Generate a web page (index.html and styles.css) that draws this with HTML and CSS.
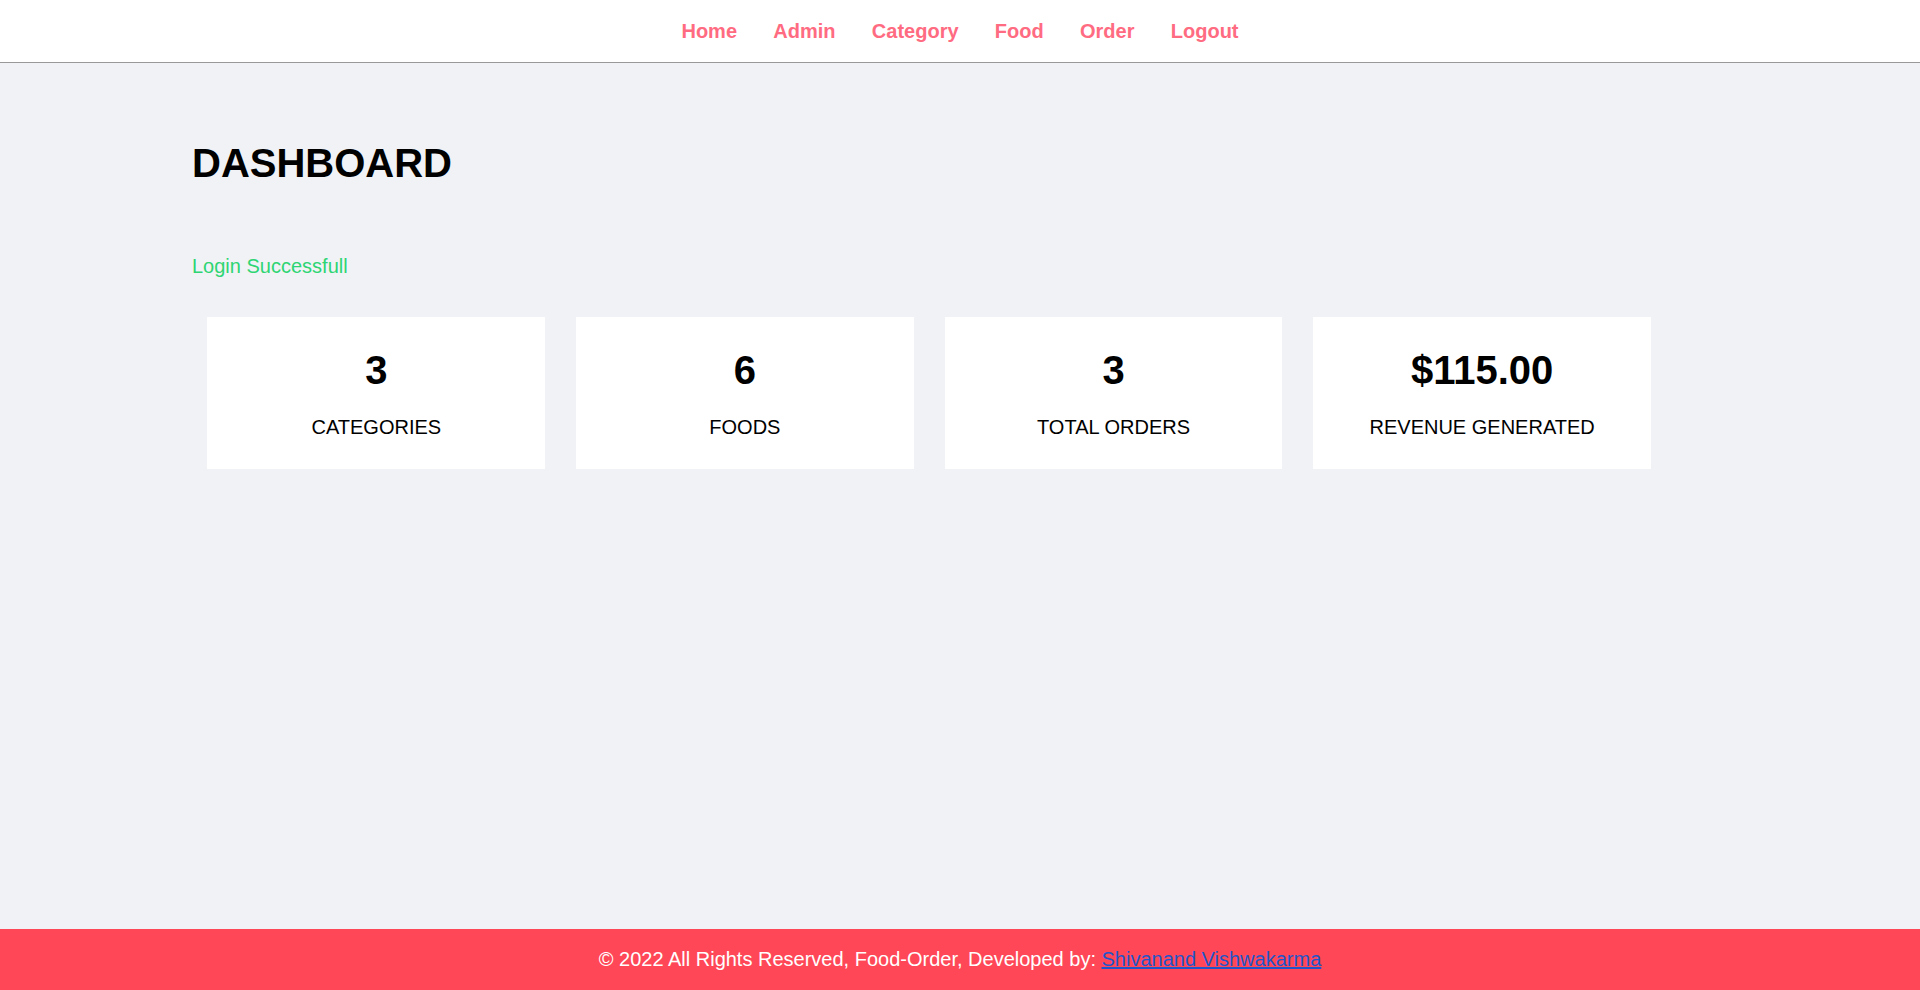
FILE: index.html
```html
<!DOCTYPE html>
<html lang="en">
<head>
<meta charset="utf-8">
<title>Food Order - Dashboard</title>
<link rel="stylesheet" href="styles.css">
</head>
<body>
<header class="menu">
  <nav class="wrapper nav">
    <a href="#">Home</a>
    <a href="#">Admin</a>
    <a href="#">Category</a>
    <a href="#">Food</a>
    <a href="#">Order</a>
    <a href="#">Logout</a>
  </nav>
</header>
<main class="main-content">
  <div class="wrapper">
    <h1 class="title">DASHBOARD</h1>
    <div class="success">Login Successfull</div>
    <div class="cards">
      <div class="card"><div class="num">3</div><div class="label">CATEGORIES</div></div>
      <div class="card"><div class="num">6</div><div class="label">FOODS</div></div>
      <div class="card"><div class="num">3</div><div class="label">TOTAL ORDERS</div></div>
      <div class="card"><div class="num">$115.00</div><div class="label">REVENUE GENERATED</div></div>
    </div>
  </div>
</main>
<footer class="footer">
  <div class="wrapper footer-text">© 2022 All Rights Reserved, Food-Order, Developed by: <a href="#" class="author">Shivanand Vishwakarma</a></div>
</footer>
</body>
</html>
```
FILE: styles.css
```css
* {
  box-sizing: content-box;
}
html, body {
  margin: 0;
  padding: 0;
}
body {
  font-family: "Liberation Sans", Arial, Helvetica, sans-serif;
  font-size: 20px;
  line-height: 23px;
  min-height: 100vh;
  display: flex;
  flex-direction: column;
  background: #ffffff;
}
.wrapper {
  width: 1536px;
  padding: 19.2px;
  margin: 0 auto;
}
.menu {
  border-bottom: 1px solid #999999;
  background: #ffffff;
}
.nav {
  display: flex;
  justify-content: center;
  gap: 36.3px;
  padding-top: 20px;
}
.nav a {
  color: #ff6b81;
  font-weight: bold;
  text-decoration: none;
}
.main-content {
  flex: 1;
  background: #f1f2f6;
  padding: 57.6px 0;
}
.title {
  margin: 0;
  font-size: 40px;
  line-height: 46px;
  font-weight: bold;
  color: #000;
}
.success {
  margin-top: 69px;
  color: #2ed573;
}
.cards {
  display: grid;
  grid-template-columns: repeat(4, 337.9px);
  gap: 30.72px;
  margin-top: 39px;
  padding-left: 15.36px;
}
.card {
  background: #ffffff;
  padding: 30px 30.72px;
  text-align: center;
  color: #000;
}
.num {
  font-size: 40px;
  line-height: 46px;
  font-weight: bold;
  margin-bottom: 23px;
}
.label {
  font-size: 20px;
}
.footer {
  background: #ff4757;
  color: #ffffff;
}
.footer-text {
  text-align: center;
}
.author {
  color: #1f55c8;
}
```
